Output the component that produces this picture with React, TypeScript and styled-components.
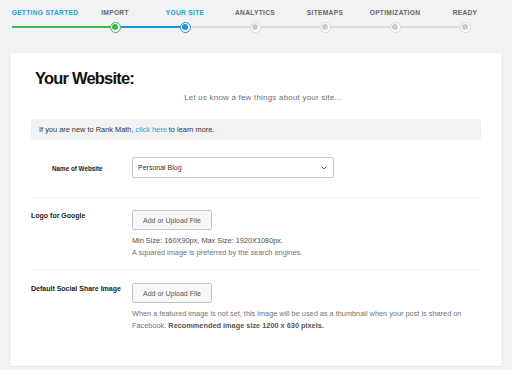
import React from 'react'
import styled, { createGlobalStyle } from 'styled-components'

const GlobalStyle = createGlobalStyle`
  html, body {
    margin: 0;
    padding: 0;
    background: #f1f2f4;
    font-family: "Liberation Sans", Arial, sans-serif;
  }
`

const Page = styled.div`
  width: 512px;
  height: 370px;
  overflow: hidden;
  background: #f1f2f4;
`

const Steps = styled.div`
  display: flex;
  padding: 9px 0 0 10px;
  height: 53px;
  box-sizing: border-box;
`

const Step = styled.div`
  width: 70px;
  display: flex;
  flex-direction: column;
  align-items: center;
`

const StepLabel = styled.div<{ $active?: boolean }>`
  font-size: 6.6px;
  font-weight: 700;
  letter-spacing: 0.32px;
  line-height: 8px;
  white-space: nowrap;
  color: ${(p) => (p.$active ? '#17a1d8' : '#63676b')};
`

const Track = styled.div`
  display: flex;
  align-items: center;
  width: 100%;
  height: 12px;
  margin-top: 4px;
`

const Segment = styled.div<{ $color: string; $edge?: 'start' | 'end' }>`
  flex: 1;
  height: 1.5px;
  background: ${(p) => p.$color};
  margin-left: ${(p) => (p.$edge === 'start' ? '2px' : '0')};
`

const Dot = styled.div<{ $color: string; $ring: string }>`
  width: 9px;
  height: 9px;
  border-radius: 50%;
  border: 1px solid ${(p) => p.$ring};
  background: #fff;
  display: flex;
  align-items: center;
  justify-content: center;
  flex: none;

  &::after {
    content: '';
    width: 6px;
    height: 6px;
    border-radius: 50%;
    background: ${(p) => p.$color};
  }
`

const Card = styled.div`
  margin-left: 11px;
  width: 490px;
  height: 314px;
  background: #fff;
  border-bottom: 1px solid #e6e7e9;
  padding: 14px 20px 0;
  box-sizing: border-box;
`

const Heading = styled.h1`
  margin: 0 0 0 4px;
  font-size: 16.5px;
  line-height: 22px;
  font-weight: 700;
  letter-spacing: -0.8px;
  color: #111;
`

const Subtitle = styled.p`
  margin: 4px 0 0;
  padding-left: 14px;
  text-align: center;
  font-size: 7.9px;
  letter-spacing: 0.25px;
  line-height: 10px;
  color: #6b6f73;
`

const Notice = styled.div`
  margin-top: 16px;
  height: 21px;
  display: flex;
  align-items: center;
  padding-left: 8px;
  background: #f1f2f4;
  border-radius: 2px;
  font-size: 7.4px;
  color: #333;
`

const Link = styled.a`
  color: #17a1d8;
  text-decoration: none;
`

const Row = styled.div<{ $pt: number; $pb: number; $last?: boolean }>`
  display: flex;
  align-items: flex-start;
  padding: ${(p) => p.$pt}px 0 ${(p) => p.$pb}px;
  border-bottom: ${(p) => (p.$last ? 'none' : '1px solid #eeeff1')};
`

const Label = styled.div<{ $indent?: number; $small?: boolean }>`
  width: ${(p) => 101 - (p.$indent ?? 0)}px;
  padding-left: ${(p) => p.$indent ?? 0}px;
  flex: none;
  font-size: ${(p) => (p.$small ? '6.3px' : '7px')};
  font-weight: 700;
  color: #222;
  line-height: 10px;
  padding-top: ${(p) => (p.$small ? '7px' : '1px')};
`

const Field = styled.div`
  display: flex;
  flex-direction: column;
`

const Select = styled.div`
  width: 202px;
  height: 21px;
  box-sizing: border-box;
  border: 1px solid #c4c6c9;
  border-radius: 2px;
  display: flex;
  align-items: center;
  justify-content: space-between;
  padding: 0 6px 0 5px;
  font-size: 7px;
  color: #333;
`

const UploadButton = styled.div`
  width: 80px;
  height: 20px;
  box-sizing: border-box;
  border: 1px solid #c4c6c9;
  border-radius: 2px;
  background: #f7f7f8;
  display: flex;
  align-items: center;
  justify-content: center;
  font-size: 7px;
  color: #555;
`

const Desc = styled.div`
  margin-top: 5px;
  font-size: 7.35px;
  line-height: 12px;
  color: #707478;
`

const DescStrong = styled.span`
  color: #555;
  font-weight: 700;
`

const DescDark = styled.span`
  color: #4a4e52;
`

const GREEN = '#3fb54e'
const BLUE = '#1d95cf'
const GRAY = '#d9dbde'

type StepDef = {
  label: string
  active?: boolean
  left: string
  right: string
  dot?: { color: string; ring: string }
}

const steps: StepDef[] = [
  { label: 'Getting Started', active: true, left: GREEN, right: GREEN },
  { label: 'Import', left: GREEN, right: BLUE, dot: { color: GREEN, ring: GREEN } },
  { label: 'Your Site', active: true, left: BLUE, right: GRAY, dot: { color: BLUE, ring: BLUE } },
  { label: 'Analytics', left: GRAY, right: GRAY, dot: { color: '#c9ccd0', ring: '#d3d5d8' } },
  { label: 'Sitemaps', left: GRAY, right: GRAY, dot: { color: '#c9ccd0', ring: '#d3d5d8' } },
  { label: 'Optimization', left: GRAY, right: GRAY, dot: { color: '#c9ccd0', ring: '#d3d5d8' } },
  { label: 'Ready', left: GRAY, right: 'transparent', dot: { color: '#c9ccd0', ring: '#d3d5d8' } },
]

const Chevron = () => (
  <svg width="6" height="4" viewBox="0 0 6 4" fill="none">
    <path d="M0.6 0.6 L3 3 L5.4 0.6" stroke="#555" strokeWidth="0.9" />
  </svg>
)

export default function App() {
  return (
    <Page>
      <GlobalStyle />
      <Steps>
        {steps.map((s, i) => (
          <Step key={s.label}>
            <StepLabel $active={s.active}>{s.label.toUpperCase()}</StepLabel>
            <Track>
              <Segment $color={s.left} $edge={i === 0 ? 'start' : undefined} />
              {s.dot && <Dot $color={s.dot.color} $ring={s.dot.ring} />}
              <Segment $color={s.right} />
            </Track>
          </Step>
        ))}
      </Steps>
      <Card>
        <Heading>Your Website:</Heading>
        <Subtitle>Let us know a few things about your site...</Subtitle>
        <Notice>
          <span>
            If you are new to Rank Math, <Link href="#">click here</Link> to learn more.
          </span>
        </Notice>
        <Row $pt={17} $pb={19}>
          <Label $indent={21} $small>
            Name of Website
          </Label>
          <Select>
            <span>Personal Blog</span>
            <Chevron />
          </Select>
        </Row>
        <Row $pt={12} $pb={10}>
          <Label>Logo for Google</Label>
          <Field>
            <UploadButton>Add or Upload File</UploadButton>
            <Desc>
              <DescDark>Min Size: 160X90px, Max Size: 1920X1080px.</DescDark>
              <br />
              A squared image is preferred by the search engines.
            </Desc>
          </Field>
        </Row>
        <Row $pt={13} $pb={0} $last>
          <Label>Default Social Share Image</Label>
          <Field>
            <UploadButton>Add or Upload File</UploadButton>
            <Desc>
              When a featured image is not set, this image will be used as a thumbnail when your post is shared on
              <br />
              Facebook. <DescStrong>Recommended image size 1200 x 630 pixels.</DescStrong>
            </Desc>
          </Field>
        </Row>
      </Card>
    </Page>
  )
}
